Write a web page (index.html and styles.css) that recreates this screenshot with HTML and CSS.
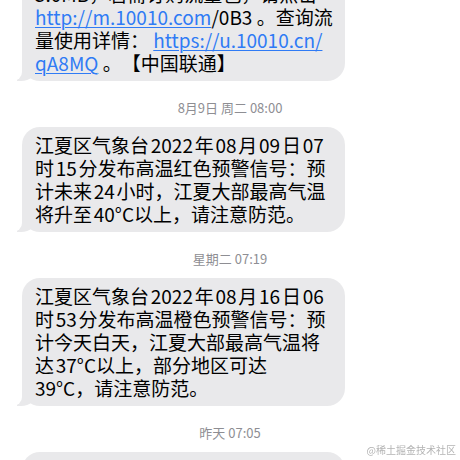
FILE: index.html
```html
<!DOCTYPE html>
<html lang="zh-CN">
<head>
    <meta charset="UTF-8">
    <meta name="viewport" content="width=device-width, initial-scale=1.0">
    <title>短信</title>
    <link rel="stylesheet" href="styles.css">
</head>
<body>
    <div class="thread">
        <div class="bubble first">
            5.0MB，若需订购流量包，请点击<br>
            <a href="#">http://m.10010.com</a>/0B3 。查询流<br>
            量使用详情： <a href="#">https://u.10010.cn/</a><br>
            <a href="#">qA8MQ</a> 。【中国联通】
        </div>

        <div class="stamp">8月9日 周二 08:00</div>

        <div class="bubble alert">
            江夏区气象台 2022 年 08 月 09 日 07<br>
            时 15 分发布高温红色预警信号：预<br>
            计未来 24 小时，江夏大部最高气温<br>
            将升至 40°C以上，请注意防范。
        </div>

        <div class="stamp">星期二 07:19</div>

        <div class="bubble alert">
            江夏区气象台 2022 年 08 月 16 日 06<br>
            时 53 分发布高温橙色预警信号：预<br>
            计今天白天，江夏大部最高气温将<br>
            达 37°C以上，部分地区可达<br>
            39°C，请注意防范。
        </div>

        <div class="stamp">昨天 07:05</div>

        <div class="bubble alert">
            江夏区气象台 2022 年 08 月 22 日 06<br>
            时 40 分发布高温橙色预警信号
        </div>
    </div>

    <div class="watermark">@稀土掘金技术社区</div>
</body>
</html>
```

FILE: styles.css
```css
html,
body {
    margin: 0;
    padding: 0;
    height: 100%;
    overflow: hidden;
    background: #fff;
}

body {
    font-family: "Noto Sans CJK SC", sans-serif;
    color: #000;
}

.bubble {
    position: relative;
    z-index: 0;
    width: 323px;
    box-sizing: border-box;
    margin-left: 22px;
    padding: 6px 13px 7px;
    background: #e9e9eb;
    border-radius: 18px;
    font-size: 19px;
    line-height: 23px;
    white-space: nowrap;
    text-spacing-trim: space-all;
}

.bubble.first {
    margin-top: -24px;
}

.bubble.alert {
    word-spacing: -2.5px;
}

/* хвостик пузыря */
.bubble::before {
    content: "";
    position: absolute;
    z-index: -1;
    left: -5px;
    bottom: 0;
    width: 20px;
    height: 18px;
    background: #e9e9eb;
    border-bottom-right-radius: 16px 14px;
}

.bubble::after {
    content: "";
    position: absolute;
    z-index: -1;
    left: -26px;
    bottom: 0;
    width: 26px;
    height: 18px;
    background: #fff;
    border-bottom-right-radius: 9px;
}

.bubble a {
    color: #2f7bf5;
    text-decoration: underline;
    text-decoration-thickness: 1px;
    text-underline-offset: 2px;
}

.stamp {
    margin: 20px 0 12px;
    text-align: center;
    font-size: 13px;
    line-height: 14px;
    color: #8e8e93;
}

.watermark {
    position: fixed;
    right: 4px;
    bottom: 3px;
    font-size: 10px;
    color: #b4b4b4;
}
```
